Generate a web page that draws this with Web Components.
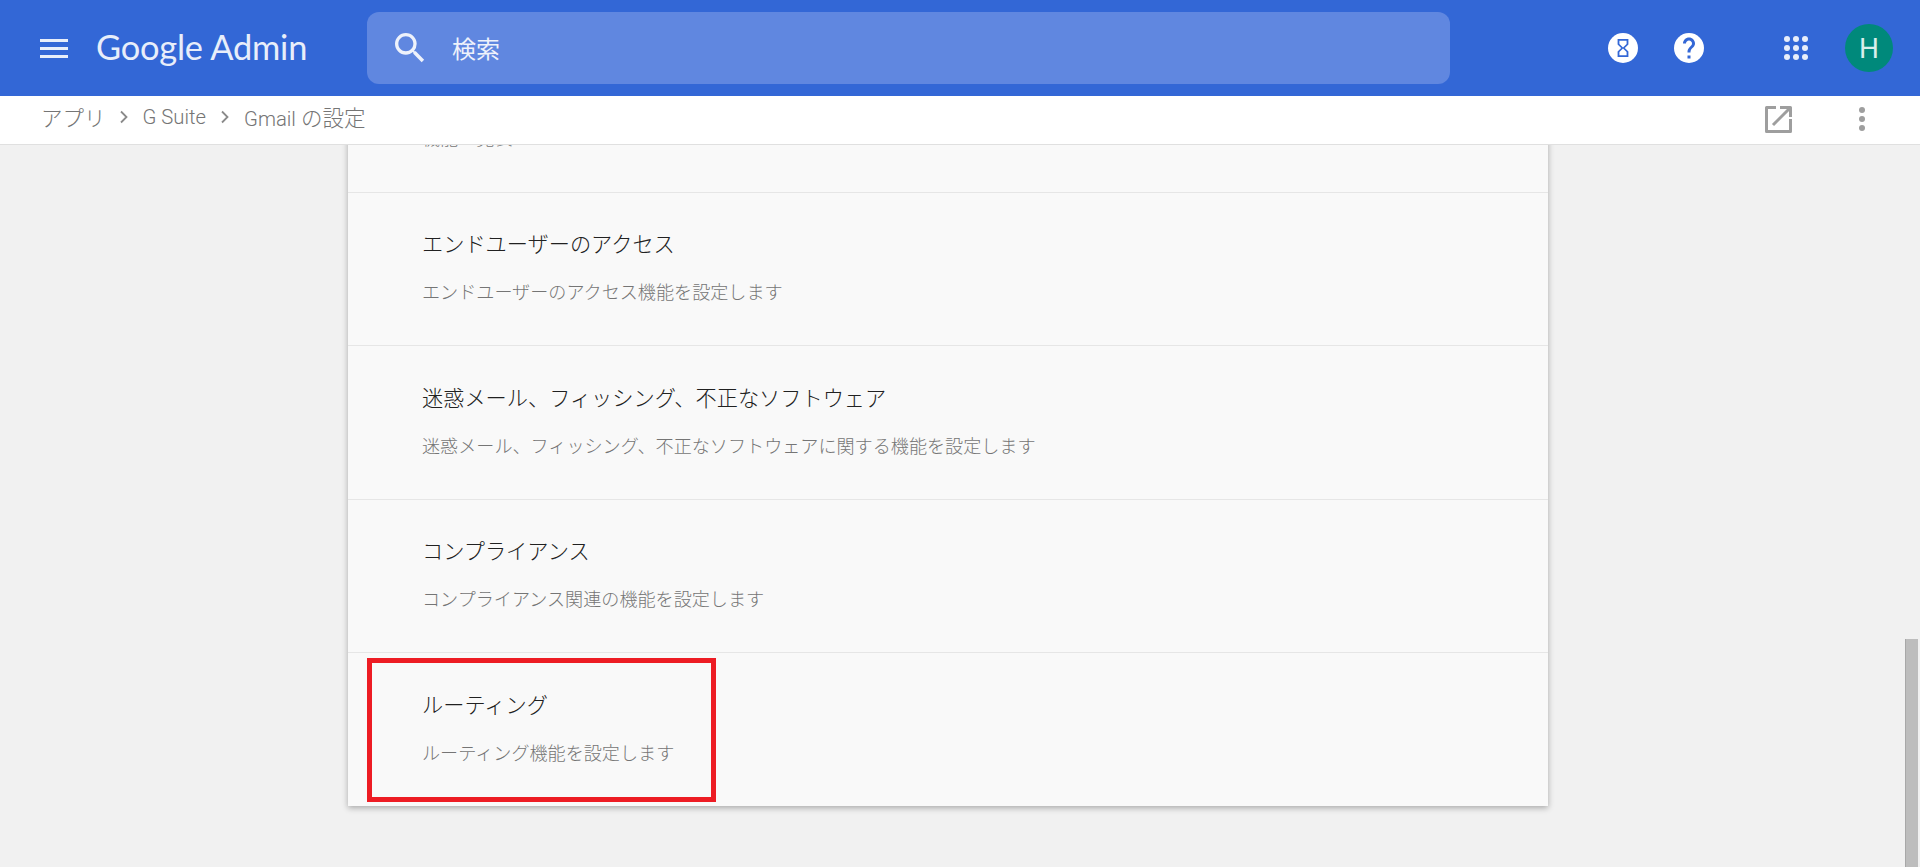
<!DOCTYPE html>
<html lang="ja">
<head>
<meta charset="utf-8">
<title>Google Admin</title>
<style>
html, body { height: 100%; margin: 0; }
body { font-family: Roboto, "Noto Sans CJK JP", sans-serif; background: #f1f1f1; overflow: hidden; }
admin-app { height: 100%; }
</style>
</head>
<body>
<admin-app>
  <admin-header slot="header"></admin-header>
  <admin-crumbs slot="crumbs"></admin-crumbs>
  <settings-card>
    <settings-row sub="機能一覧表"></settings-row>
    <settings-row title="エンドユーザーのアクセス" sub="エンドユーザーのアクセス機能を設定します"></settings-row>
    <settings-row title="迷惑メール、フィッシング、不正なソフトウェア" sub="迷惑メール、フィッシング、不正なソフトウェアに関する機能を設定します"></settings-row>
    <settings-row title="コンプライアンス" sub="コンプライアンス関連の機能を設定します"></settings-row>
    <settings-row title="ルーティング" sub="ルーティング機能を設定します" marked></settings-row>
  </settings-card>
</admin-app>

<script>
class AdminApp extends HTMLElement {
    constructor() {
        super();
        let shadowRoot = this.attachShadow({ mode: 'open' });
        shadowRoot.innerHTML = `
        <style>
        :host { display:flex; flex-direction:column; height:100%; }
        .body { flex:1; min-height:0; display:flex; }
        /* content is pinned to the bottom, the top row runs under the bar */
        main { flex:1; min-width:0; display:flex; flex-direction:column; justify-content:flex-end; align-items:center; overflow:hidden; padding-bottom:61px; }
        .track { width:24px; box-sizing:border-box; padding:494px 2px 0 9px; }
        .thumb { height:100%; background:#bdbdbd; border-left:1px solid #a8a8a8; box-sizing:border-box; }
        </style>
        <slot name="header"></slot>
        <slot name="crumbs"></slot>
        <div class="body">
            <main><slot></slot></main>
            <div class="track"><div class="thumb"></div></div>
        </div>
        `;
    }
}

class AdminHeader extends HTMLElement {
    constructor() {
        super();
        let shadowRoot = this.attachShadow({ mode: 'open' });
        shadowRoot.innerHTML = `
        <style>
        :host { display:flex; align-items:center; height:96px; background:#3367d6; color:#fff; flex:none; padding:0 27px 0 40px; box-sizing:border-box; }
        svg { display:block; flex:none; }
        .logo { font:400 34.4px/40px Lato, sans-serif; color:#e8eefa; margin:0 0 2px 28px; width:271px; white-space:nowrap; letter-spacing:-.2px; }
        .search { width:1083px; height:72px; background:#6087e0; border-radius:12px; display:flex; align-items:center; padding-left:23px; box-sizing:border-box; }
        .search span { margin:0 0 2px 22px; font-size:24px; color:#eef2fb; }
        .right { flex:1; display:flex; align-items:center; justify-content:flex-end; }
        .avatar { width:48px; height:48px; border-radius:50%; background:#00897b; display:flex; align-items:center; justify-content:center; font:400 28px Roboto, sans-serif; color:#d9eeeb; margin-left:37px; }
        .help { margin-left:36px; }
        .apps { margin-left:80px; }
        </style>
        <svg width="28" height="19" viewBox="0 0 28 19" fill="#e8eefa"><rect x="0" y="0" width="28" height="3"/><rect x="0" y="8" width="28" height="3"/><rect x="0" y="16" width="28" height="3"/></svg>
        <div class="logo">Google Admin</div>
        <div class="search">
            <svg width="40" height="40" viewBox="0 0 24 24" fill="#eef2fb"><path d="M15.5 14h-.79l-.28-.27A6.470 6.470 0 0 0 16 9.500 6.500 6.500 0 1 0 9.500 16c1.610 0 3.090-.59 4.230-1.570l.27.28v.79l5 4.990L20.490 19l-4.990-5zm-6 0C7.010 14 5 11.990 5 9.500S7.010 5 9.500 5 14 7.010 14 9.500 11.990 14 9.500 14z"/></svg>
            <span>検索</span>
        </div>
        <div class="right">
            <svg width="30" height="30" viewBox="0 0 30 30"><circle cx="15" cy="15" r="15" fill="#fff"/><g transform="translate(15 15) scale(.9) translate(-12 -12)"><path fill="#3367d6" d="M6 2v6h.01L6 8.010 10 12l-4 4 .01.01H6V22h12v-5.990h-.01L18 16l-4-4 4-3.990-.01-.01H18V2H6zm10 14.500V20H8v-3.500l4-4 4 4zm-4-5l-4-4V4h8v3.500l-4 4z"/></g></svg>
            <svg class="help" width="30" height="30" viewBox="2 2 20 20"><circle cx="12" cy="12" r="10" fill="#fff"/><path fill="#3367d6" d="M13 19h-2v-2h2v2zm2.070-7.750l-.9.92C13.450 12.900 13 13.500 13 15h-2v-.5c0-1.100.45-2.100 1.170-2.830l1.240-1.260c.37-.36.59-.86.59-1.410 0-1.100-.9-2-2-2s-2 .9-2 2H8c0-2.210 1.790-4 4-4s4 1.790 4 4c0 .88-.36 1.680-.93 2.250z"/></svg>
            <svg class="apps" width="24" height="24" viewBox="0 0 24 24" fill="#e8eefa"><circle cx="3" cy="3" r="3"/><circle cx="12" cy="3" r="3"/><circle cx="21" cy="3" r="3"/><circle cx="3" cy="12" r="3"/><circle cx="12" cy="12" r="3"/><circle cx="21" cy="12" r="3"/><circle cx="3" cy="21" r="3"/><circle cx="12" cy="21" r="3"/><circle cx="21" cy="21" r="3"/></svg>
            <div class="avatar">H</div>
        </div>
        `;
    }
}

class AdminCrumbs extends HTMLElement {
    constructor() {
        super();
        let shadowRoot = this.attachShadow({ mode: 'open' });
        shadowRoot.innerHTML = `
        <style>
        :host { display:flex; align-items:center; height:49px; background:#fff; border-bottom:1px solid #e0e0e0; box-sizing:border-box; padding:0 54px 2px 41px; flex:none; position:relative; z-index:1; font-size:20.3px; font-weight:300; color:#757575; white-space:nowrap; }
        svg { display:block; flex:none; }
        .path { display:flex; align-items:center; margin-bottom:5px; }
        .jp { font-size:21.5px; }
        .sep { margin:0 14px; }
        .sep:first-of-type { margin-left:13px; }
        .right { flex:1; display:flex; align-items:center; justify-content:flex-end; }
        .more { margin-left:66px; }
        </style>
        <div class="path">
            <span class="jp">アプリ</span>
            <svg class="sep" width="10" height="14" viewBox="0 0 10 14" fill="none" stroke="#8a8a8a" stroke-width="1.800"><path d="M2 1.500 7.500 7 2 12.500"/></svg>
            <span>G Suite</span>
            <svg class="sep" width="10" height="14" viewBox="0 0 10 14" fill="none" stroke="#8a8a8a" stroke-width="1.800"><path d="M2 1.500 7.500 7 2 12.500"/></svg>
            <span>Gmail <span class="jp">の設定</span></span>
        </div>
        <div class="right">
            <svg width="27" height="27" viewBox="0 0 27 27" fill="none" stroke="#9e9e9e" stroke-width="3" stroke-linejoin="round"><path d="M11 1.500H1.500v24h24V13M15 1.500H25.500V11M25.500 1.500 8 19"/></svg>
            <svg class="more" width="8" height="26" viewBox="0 0 8 26" fill="#9e9e9e"><circle cx="4" cy="4" r="3"/><circle cx="4" cy="13" r="3"/><circle cx="4" cy="22" r="3"/></svg>
        </div>
        `;
    }
}

class SettingsCard extends HTMLElement {
    constructor() {
        super();
        let shadowRoot = this.attachShadow({ mode: 'open' });
        shadowRoot.innerHTML = `
        <style>
        :host { display:block; flex:none; width:1200px; background:#f9f9f9; box-shadow:0 2px 6px rgba(0,0,0,.3); }
        </style>
        <slot></slot>
        `;
    }
}

class SettingsRow extends HTMLElement {
    constructor() {
        super();
        let shadowRoot = this.attachShadow({ mode: 'open' });
        shadowRoot.innerHTML = `
        <style>
        :host { display:flex; flex-direction:column; justify-content:center; height:153.6px; box-sizing:border-box; padding:0 74px 2px; border-top:1px solid #e6e6e6; position:relative; white-space:nowrap; }
        :host(:first-child) { border-top:0; }
        .title { font-size:21.2px; line-height:30px; min-height:30px; font-weight:300; color:#212121; }
        .sub { font-size:18.1px; line-height:26px; font-weight:300; color:#757575; margin-top:20px; }
        .mark { position:absolute; left:19px; top:5px; width:349px; height:144px; box-sizing:border-box; border:5px solid #ed1c24; }
        </style>
        <div class="title"></div>
        <div class="sub"></div>
        `;
        shadowRoot.querySelector('.title').textContent = this.getAttribute('title') || '';
        shadowRoot.querySelector('.sub').textContent = this.getAttribute('sub') || '';
        if (this.hasAttribute('marked')) {
            const mark = document.createElement('div');
            mark.className = 'mark';
            shadowRoot.appendChild(mark);
        }
    }
}

customElements.define('admin-app', AdminApp);
customElements.define('admin-header', AdminHeader);
customElements.define('admin-crumbs', AdminCrumbs);
customElements.define('settings-card', SettingsCard);
customElements.define('settings-row', SettingsRow);
</script>
</body>
</html>
